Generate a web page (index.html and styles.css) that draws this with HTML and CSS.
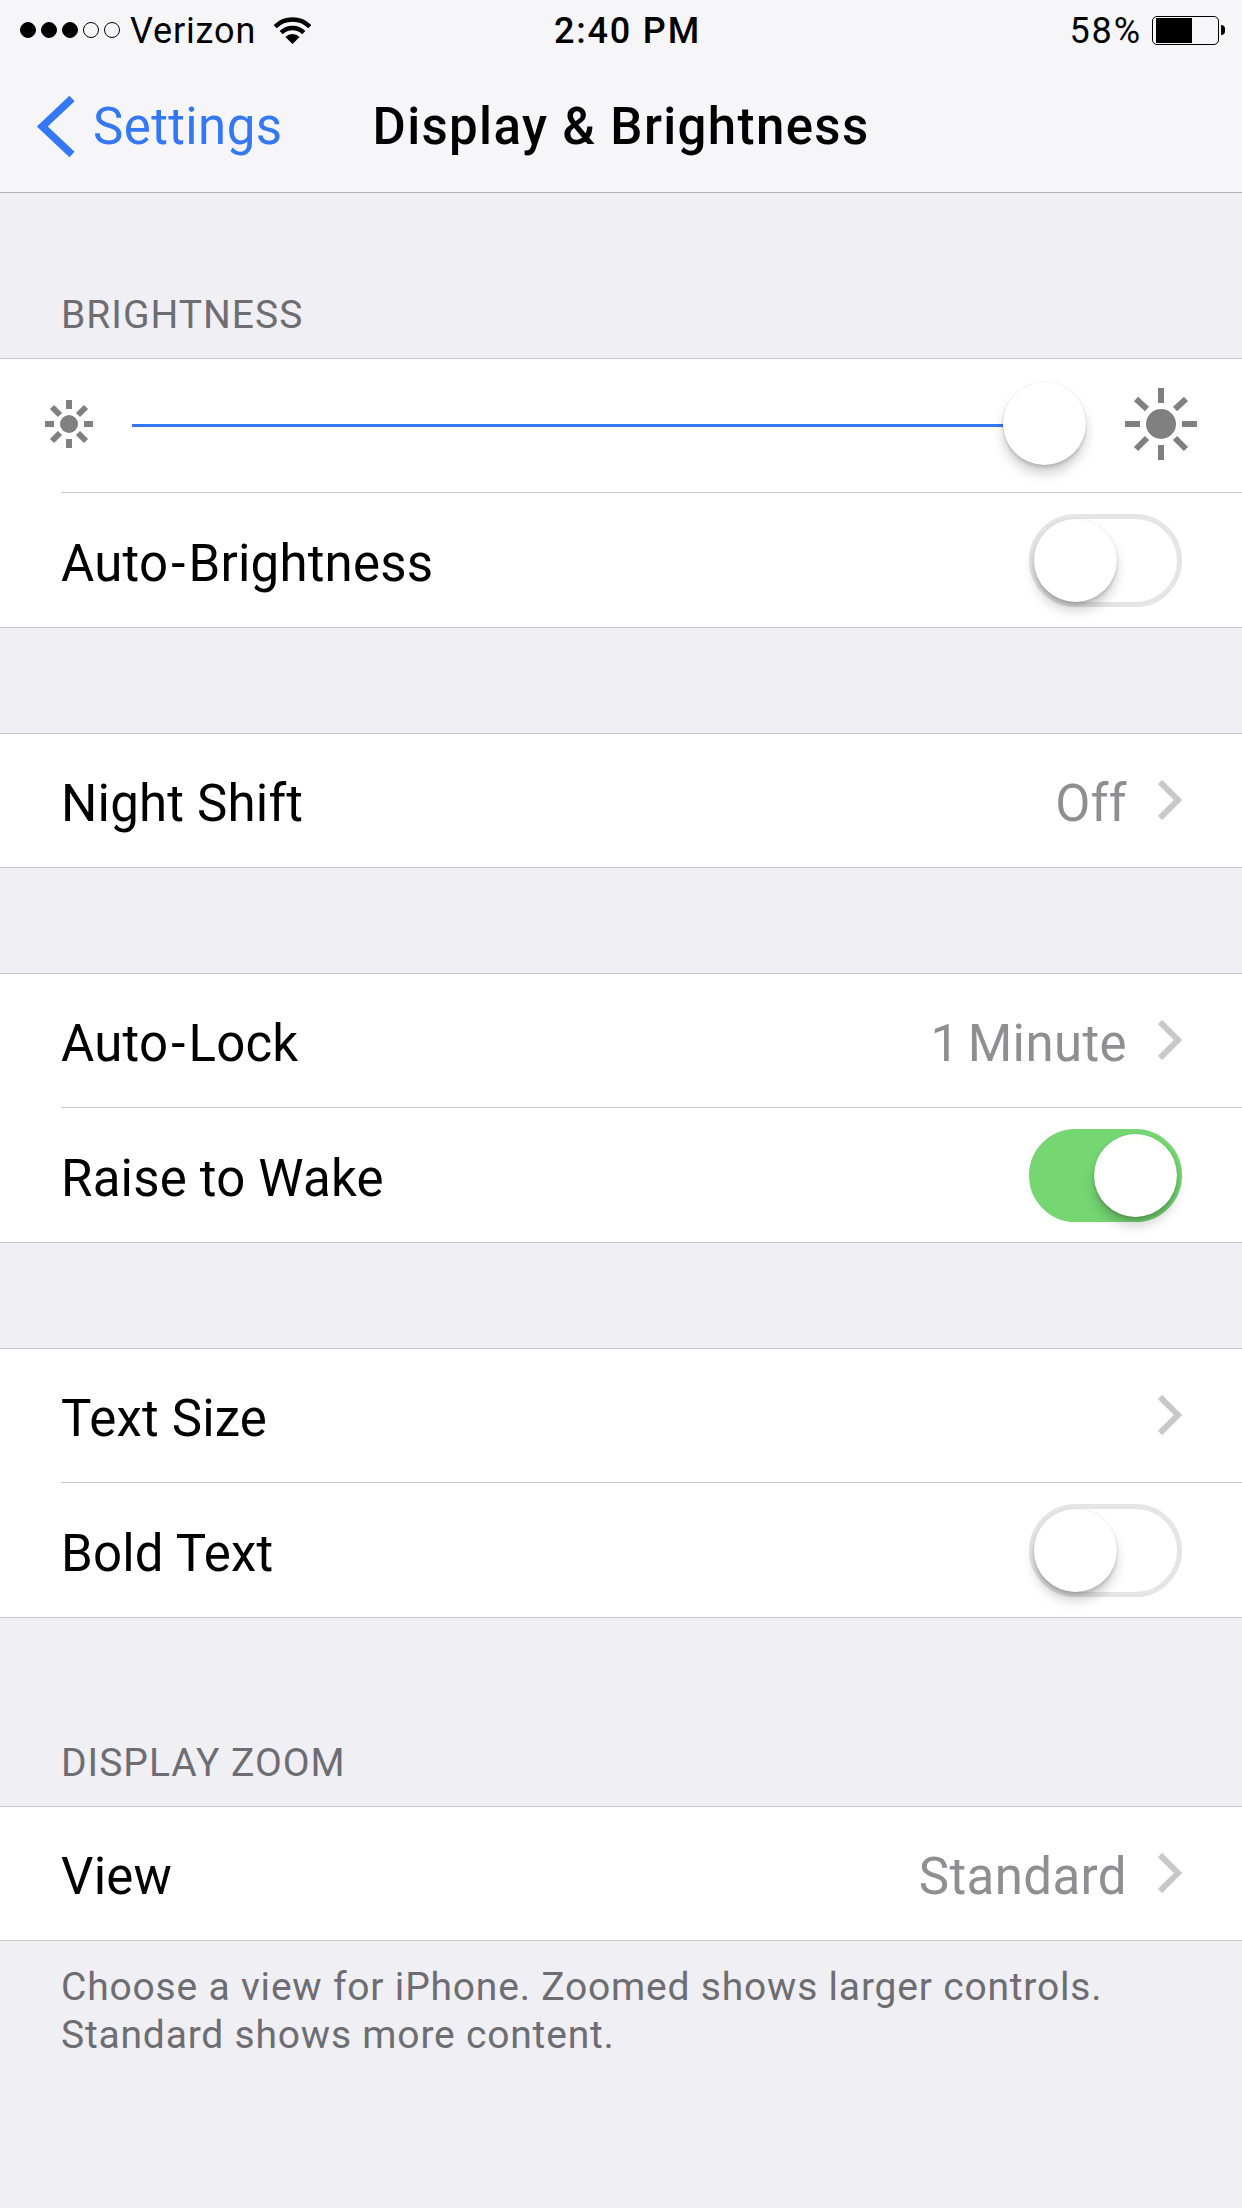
FILE: index.html
```html
<!DOCTYPE html>
<html lang="en">
<head>
    <meta charset="UTF-8">
    <title>Display &amp; Brightness</title>
    <link rel="stylesheet" href="styles.css">
</head>
<body>
    <header class="top-bar">
        <div class="status-bar">
            <div class="status-left">
                <div class="signal">
                    <span class="dot on"></span><span class="dot on"></span><span class="dot on"></span><span class="dot"></span><span class="dot"></span>
                </div>
                <span class="carrier">Verizon</span>
                <svg class="wifi" width="37" height="27" viewBox="0 0 37 27">
                    <path d="M18.500 27 L11.400 19.900 A10 10 0 0 1 25.600 19.900 Z" fill="#000"/>
                    <path d="M7.200 15.700 A16 16 0 0 1 29.800 15.700" fill="none" stroke="#000" stroke-width="4.500"/>
                    <path d="M1.200 9.700 A24.500 24.500 0 0 1 35.800 9.700" fill="none" stroke="#000" stroke-width="4.500"/>
                </svg>
            </div>
            <div class="status-time">2:40 PM</div>
            <div class="status-right">
                <span class="percent">58%</span>
                <div class="battery"><div class="battery-fill"></div></div>
                <div class="battery-nub"></div>
            </div>
        </div>
        <nav class="nav-bar">
            <a class="back">
                <svg width="40" height="65" viewBox="0 0 40 65">
                    <path d="M36 4.500 L6.300 32.500 L36 60.500" fill="none" stroke="#3478f6" stroke-width="7.500"/>
                </svg>
                <span class="back-text">Settings</span>
            </a>
            <h1>Display &amp; Brightness</h1>
        </nav>
    </header>

    <div class="section-label label-first">BRIGHTNESS</div>
    <section class="group">
        <div class="slider-row">
            <svg class="sun" width="50" height="50" viewBox="0 0 50 50">
                <circle cx="25" cy="25" r="9" fill="#808080"/>
                <g stroke="#808080" stroke-width="6">
                    <path d="M25 1 V10 M25 40 V49 M1 25 H10 M40 25 H49"/>
                    <path d="M8 8 L16 16 M34 34 L42 42 M42 8 L34 16 M16 34 L8 42"/>
                </g>
            </svg>
            <div class="slider-track">
                <div class="slider-fill"></div>
                <div class="knob"></div>
            </div>
            <svg class="sun" width="74" height="74" viewBox="0 0 74 74">
                <circle cx="37" cy="37" r="15" fill="#808080"/>
                <g stroke="#808080" stroke-width="6">
                    <path d="M37 1 V16 M37 58 V73 M1 37 H16 M58 37 H73"/>
                    <path d="M12 12 L23 22 M51 51 L62 62 M62 12 L51 22 M23 51 L12 62"/>
                </g>
            </svg>
        </div>
        <div class="row">
            <span class="row-title">Auto<span class="hyphen">-</span>Brightness</span>
            <div class="toggle"><div class="knob"></div></div>
        </div>
    </section>

    <div class="gap"></div>
    <section class="group">
        <div class="row">
            <span class="row-title">Night Shift</span>
            <span class="row-value">Off</span>
            <svg class="chevron" width="24" height="40" viewBox="0 0 24 40"><path d="M2 2 L20 20 L2 38" fill="none" stroke="#c7c7cc" stroke-width="6"/></svg>
        </div>
    </section>

    <div class="gap"></div>
    <section class="group">
        <div class="row">
            <span class="row-title">Auto<span class="hyphen">-</span>Lock</span>
            <span class="row-value">1 Minute</span>
            <svg class="chevron" width="24" height="40" viewBox="0 0 24 40"><path d="M2 2 L20 20 L2 38" fill="none" stroke="#c7c7cc" stroke-width="6"/></svg>
        </div>
        <div class="row">
            <span class="row-title">Raise to Wake</span>
            <div class="toggle on"><div class="knob"></div></div>
        </div>
    </section>

    <div class="gap"></div>
    <section class="group">
        <div class="row">
            <span class="row-title">Text Size</span>
            <svg class="chevron" width="24" height="40" viewBox="0 0 24 40"><path d="M2 2 L20 20 L2 38" fill="none" stroke="#c7c7cc" stroke-width="6"/></svg>
        </div>
        <div class="row">
            <span class="row-title">Bold Text</span>
            <div class="toggle"><div class="knob"></div></div>
        </div>
    </section>

    <div class="section-label label-zoom">DISPLAY ZOOM</div>
    <section class="group">
        <div class="row">
            <span class="row-title">View</span>
            <span class="row-value">Standard</span>
            <svg class="chevron" width="24" height="40" viewBox="0 0 24 40"><path d="M2 2 L20 20 L2 38" fill="none" stroke="#c7c7cc" stroke-width="6"/></svg>
        </div>
    </section>
    <p class="footnote">Choose a view for iPhone. Zoomed shows larger controls.<br>Standard shows more content.</p>
</body>
</html>
```

FILE: styles.css
```css
* {
    box-sizing: border-box;
}

html, body {
    margin: 0;
    height: 100%;
}

body {
    background-color: #efeff4;
    font-family: Roboto, "Liberation Sans", sans-serif;
    color: #000;
    overflow: hidden;
}

.top-bar {
    background-color: #f6f6f8;
    border-bottom: 1px solid #b2b2b6;
    height: 193px;
}

.status-bar {
    height: 60px;
    padding: 0 17px 0 20px;
    display: grid;
    grid-template-columns: 1fr auto 1fr;
    align-items: center;
    font-size: 36px;
}

.status-left, .status-right {
    display: flex;
    align-items: center;
}

.status-right {
    justify-content: flex-end;
}

.signal {
    display: flex;
    gap: 5px;
}

.dot {
    width: 16px;
    height: 16px;
    border-radius: 50%;
    border: 1px solid #000;
}

.dot.on {
    background-color: #000;
}

.carrier {
    margin-left: 10px;
    padding-top: 2px;
    letter-spacing: 0.85px;
}

.wifi {
    margin-left: 18px;
}

.status-time {
    margin-left: 10px;
    padding-top: 2px;
    font-weight: 500;
    letter-spacing: 1.8px;
}

.percent {
    margin-right: 10px;
    padding-top: 2px;
    letter-spacing: 1.9px;
}

.battery {
    width: 67px;
    height: 29px;
    border: 1px solid #000;
    border-radius: 5px;
    padding: 1px 3px;
}

.battery-fill {
    width: 36px;
    height: 100%;
    background-color: #000;
}

.battery-nub {
    width: 4px;
    height: 10px;
    margin-left: 2px;
    background-color: #000;
    border-radius: 0 5px 5px 0;
}

.nav-bar {
    height: 132px;
    display: grid;
    grid-template-columns: 1fr auto 1fr;
    align-items: center;
}

.nav-bar h1 {
    margin: 0;
    font-size: 51px;
    font-weight: 500;
    letter-spacing: 1.35px;
}

.back {
    padding-left: 36px;
    display: flex;
    align-items: center;
    gap: 17px;
    color: #3478f6;
    font-size: 51px;
}

.back-text {
    letter-spacing: 0.4px;
}

.section-label {
    color: #6d6d72;
    font-size: 39px;
    letter-spacing: 1px;
    padding-left: 61px;
}

.label-first {
    height: 165px;
    padding-top: 99px;
}

.label-zoom {
    height: 188px;
    padding-top: 122px;
}

.gap {
    height: 105px;
}

.group {
    background-color: #fff;
    border-top: 1px solid #c8c7cc;
    border-bottom: 1px solid #c8c7cc;
}

.slider-row {
    height: 133px;
    display: flex;
    align-items: center;
    padding: 0 44px;
}

.sun {
    margin-bottom: 3px;
}

.slider-row .sun:first-child {
    margin-right: 38px;
}

.slider-row .sun:last-child {
    margin-left: 38px;
}

.slider-track {
    flex: 1;
    height: 3px;
    position: relative;
}

.slider-fill {
    height: 100%;
    background-color: #3478f6;
    margin-right: 83px;
}

.slider-track .knob {
    position: absolute;
    right: 0;
    top: -42px;
}

.knob {
    width: 83px;
    height: 83px;
    border-radius: 50%;
    background-color: #fff;
    box-shadow: 0 9px 12px rgba(0, 0, 0, 0.18), 0 3px 3px rgba(0, 0, 0, 0.12), 0 0 2px rgba(0, 0, 0, 0.12);
}

.row {
    height: 135px;
    margin-left: 61px;
    padding-right: 60px;
    border-top: 1px solid #c8c7cc;
    display: flex;
    align-items: center;
}

.group > .row:first-child {
    height: 133px;
    border-top: none;
}

.row-title {
    flex: 1;
    padding-top: 6px;
    font-size: 51px;
    letter-spacing: 0.2px;
}

.hyphen {
    margin: 0 3px;
}

.row-value {
    padding-top: 6px;
    font-size: 51px;
    letter-spacing: 0.4px;
    word-spacing: -5px;
    color: #8e8e93;
    margin-right: 31px;
}

.chevron {
    margin-bottom: 2px;
}

.toggle {
    width: 153px;
    height: 93px;
    border-radius: 47px;
    border: 5px solid #e5e5e5;
    background-color: #fff;
}

.toggle.on {
    background-color: #75d672;
    border-color: #75d672;
    display: flex;
    justify-content: flex-end;
}

.footnote {
    margin: 22px 0 0;
    padding-left: 61px;
    color: #6d6d72;
    font-size: 39px;
    letter-spacing: 0.8px;
    line-height: 48px;
}
```
